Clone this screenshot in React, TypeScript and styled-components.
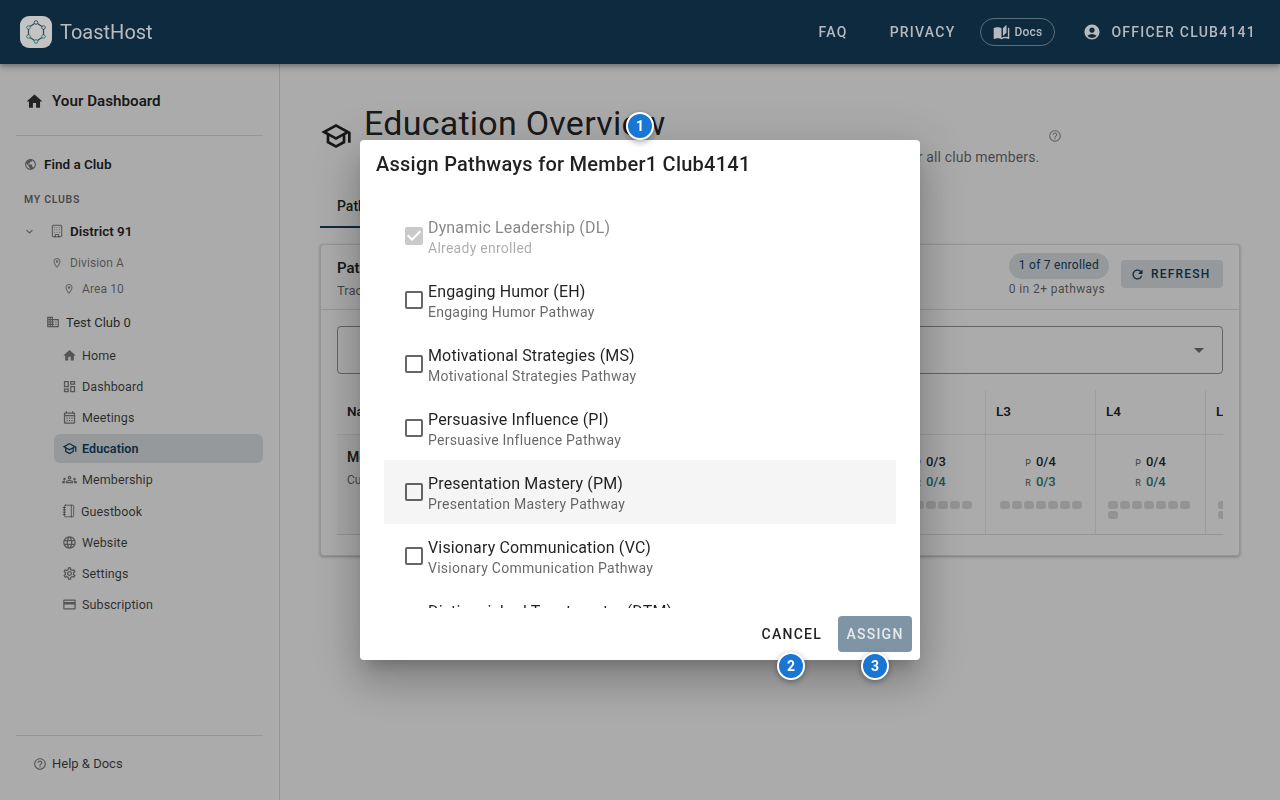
import * as React from 'react';
import styled, { createGlobalStyle } from 'styled-components';
import {
  MdAccountCircle,
  MdArrowDropDown,
  MdAutoStories,
  MdCheckBox,
  MdCheckBoxOutlineBlank,
  MdCreditCard,
  MdExpandMore,
  MdHelpOutline,
  MdHome,
  MdLanguage,
  MdOutlineBusiness,
  MdOutlineCalendarMonth,
  MdOutlineDashboard,
  MdOutlineGroups,
  MdOutlineLocationOn,
  MdOutlineSchool,
  MdOutlineSettings,
  MdPublic,
  MdRefresh,
} from 'react-icons/md';
import { Building, Notebook } from 'lucide-react';

const GlobalStyle = createGlobalStyle`
  html, body {
    margin: 0;
    height: 100%;
    overflow: hidden;
    background: #fff;
    font-family: Roboto, "Liberation Sans", sans-serif;
  }
`;

const Page = styled.div`
  height: 800px;
  display: flex;
  flex-direction: column;
`;

const Header = styled.header`
  position: relative;
  z-index: 10;
  height: 64px;
  flex: none;
  display: flex;
  align-items: center;
  padding: 0 24px 0 20px;
  background: #0e2a3e;
  color: #b4babe;
  box-shadow: 0 2px 4px -1px rgba(0, 0, 0, 0.2), 0 4px 5px rgba(0, 0, 0, 0.14),
    0 1px 10px rgba(0, 0, 0, 0.12);
`;

const LogoBox = styled.div`
  width: 32px;
  height: 32px;
  border-radius: 9px;
  background: #c4c4c4;
  display: flex;
  align-items: center;
  justify-content: center;
  margin-right: 8px;
`;

const Brand = styled.div`
  font-size: 20px;
  letter-spacing: 0;
  color: #b9bdc0;
`;

const HeaderNav = styled.nav`
  margin-left: auto;
  display: flex;
  align-items: center;
`;

const NavLink = styled.span<{ $gap: number }>`
  font-size: 14px;
  font-weight: 500;
  letter-spacing: 1.25px;
  margin-right: ${(p) => p.$gap}px;
`;

const DocsPill = styled.span`
  display: flex;
  align-items: center;
  gap: 5px;
  height: 28px;
  padding: 0 12px;
  box-sizing: border-box;
  border: 1px solid #5c6f7c;
  border-radius: 14px;
  font-size: 12px;
  font-weight: 500;
  letter-spacing: 0.2px;
  margin-right: 28px;
`;

const UserName = styled.span`
  display: flex;
  align-items: center;
  gap: 10px;
  font-size: 14px;
  font-weight: 500;
  letter-spacing: 1.25px;
`;

const Body = styled.div`
  flex: 1;
  min-height: 0;
  display: flex;
`;

const Sidebar = styled.aside`
  width: 280px;
  flex: none;
  box-sizing: border-box;
  border-right: 1px solid rgba(0, 0, 0, 0.12);
  padding: 24px 16px 0;
  display: flex;
  flex-direction: column;
`;

const DashboardLink = styled.div`
  display: flex;
  align-items: center;
  height: 26px;
  padding-left: 9px;
  gap: 8px;
  font-size: 15.2px;
  font-weight: 600;
  color: rgba(0, 0, 0, 0.87);
  svg {
    color: rgba(0, 0, 0, 0.8);
  }
`;

const Rule = styled.hr`
  border: 0;
  height: 1px;
  background: rgba(0, 0, 0, 0.12);
  margin: 21px 0 0;
`;

const FindClub = styled.div`
  display: flex;
  align-items: center;
  gap: 7px;
  margin-top: 18px;
  height: 20px;
  padding-left: 8px;
  font-size: 13.5px;
  font-weight: 600;
  color: rgba(0, 0, 0, 0.87);
  svg {
    color: rgba(0, 0, 0, 0.5);
  }
`;

const SectionLabel = styled.div`
  margin-top: 18px;
  padding-left: 8px;
  font-size: 10.5px;
  font-weight: 600;
  letter-spacing: 0.7px;
  line-height: 16px;
  color: rgba(0, 0, 0, 0.6);
`;

const DistrictRow = styled.div`
  display: flex;
  align-items: center;
  margin-top: 11px;
  margin-bottom: 7px;
  height: 24px;
  padding-left: 7px;
  font-size: 13.5px;
  font-weight: 600;
  color: rgba(0, 0, 0, 0.87);
  svg {
    color: rgba(0, 0, 0, 0.5);
    flex: none;
  }
`;

const RowIconGap = styled.span`
  display: inline-flex;
  margin: 0 6px 0 14px;
`;

const RegionRow = styled.div<{ $indent: number }>`
  display: flex;
  align-items: center;
  gap: 7px;
  height: 26px;
  padding-left: ${(p) => p.$indent}px;
  font-size: 12px;
  color: rgba(0, 0, 0, 0.55);
  letter-spacing: 0.1px;
  svg {
    color: rgba(0, 0, 0, 0.42);
  }
`;

const ClubRow = styled.div`
  display: flex;
  align-items: center;
  gap: 6px;
  height: 24px;
  margin-top: 8px;
  padding-left: 30px;
  font-size: 13px;
  color: rgba(0, 0, 0, 0.8);
  svg {
    color: rgba(0, 0, 0, 0.5);
  }
`;

const ClubNav = styled.div`
  display: flex;
  flex-direction: column;
  margin: 6.5px 0 0 38px;
`;

const ClubNavItem = styled.div<{ $active?: boolean }>`
  display: flex;
  align-items: center;
  gap: 5px;
  height: 29.2px;
  margin-bottom: 2px;
  padding-left: 8px;
  border-radius: 6px;
  font-size: 12.5px;
  letter-spacing: 0.1px;
  font-weight: ${(p) => (p.$active ? 600 : 400)};
  color: ${(p) => (p.$active ? '#15405d' : 'rgba(0, 0, 0, 0.75)')};
  background: ${(p) => (p.$active ? 'rgba(21, 63, 93, 0.14)' : 'transparent')};
  svg {
    color: ${(p) => (p.$active ? '#15405d' : 'rgba(0, 0, 0, 0.5)')};
  }
`;

const SidebarFooter = styled.div`
  margin-top: auto;
  border-top: 1px solid rgba(0, 0, 0, 0.12);
  height: 65px;
  box-sizing: border-box;
  padding: 18px 0 0 17px;
  display: flex;
  align-items: flex-start;
  gap: 5px;
  font-size: 13px;
  line-height: 20px;
  color: rgba(0, 0, 0, 0.75);
  svg {
    color: rgba(0, 0, 0, 0.5);
    margin-top: 3px;
  }
`;

const Main = styled.main`
  flex: 1;
  min-width: 0;
  padding: 39px 40px 0;
`;

const TitleRow = styled.div`
  display: flex;
  align-items: flex-start;
  height: 93px;
  svg {
    flex: none;
  }
`;

const TitleIcon = styled.div`
  margin: 17px 12px 0 0;
  display: flex;
  color: rgba(0, 0, 0, 0.87);
`;

const Title = styled.h1`
  margin: 0;
  font-size: 34px;
  font-weight: 400;
  line-height: 40px;
  letter-spacing: 0.25px;
  color: rgba(0, 0, 0, 0.87);
`;

const Subtitle = styled.p`
  margin: 4px 0 0;
  font-size: 14px;
  line-height: 20px;
  letter-spacing: 0.15px;
  color: rgba(0, 0, 0, 0.6);
`;

const HelpSpot = styled.div`
  margin: 26px 0 0 auto;
  padding-right: 178px;
  display: flex;
  color: rgba(0, 0, 0, 0.4);
`;

const Tabs = styled.div`
  height: 32px;
  display: flex;
`;

const Tab = styled.div`
  width: 150px;
  height: 30px;
  padding-left: 17px;
  font-size: 14px;
  font-weight: 500;
  line-height: 20px;
  color: rgba(0, 0, 0, 0.87);
  border-bottom: 2px solid #15405d;
`;

const Card = styled.section`
  margin-top: 16px;
  height: 312px;
  box-sizing: border-box;
  border: 1px solid rgba(0, 0, 0, 0.12);
  border-radius: 4px;
  box-shadow: 0 1px 3px rgba(0, 0, 0, 0.3);
  background: #fff;
`;

const CardHeader = styled.div`
  height: 65px;
  box-sizing: border-box;
  display: flex;
  justify-content: space-between;
  padding: 8px 16px 0;
  border-bottom: 1px solid rgba(0, 0, 0, 0.12);
`;

const CardIntro = styled.div`
  padding-top: 2px;
`;

const CardTitle = styled.div`
  font-size: 15px;
  font-weight: 600;
  line-height: 26px;
  color: rgba(0, 0, 0, 0.87);
`;

const CardSub = styled.div`
  font-size: 13px;
  line-height: 20px;
  color: rgba(0, 0, 0, 0.6);
`;

const CardActions = styled.div`
  display: flex;
  align-items: flex-start;
  gap: 12px;
`;

const EnrollStats = styled.div`
  display: flex;
  flex-direction: column;
  align-items: flex-start;
`;

const EnrollChip = styled.div`
  height: 26px;
  padding: 0 10px;
  border-radius: 13px;
  font-size: 12px;
  letter-spacing: 0.27px;
  line-height: 25px;
  color: #15405d;
  background: rgba(21, 63, 93, 0.14);
`;

const EnrollNote = styled.div`
  margin-top: 1px;
  font-size: 12px;
  letter-spacing: 0.4px;
  line-height: 18px;
  color: rgba(0, 0, 0, 0.6);
`;

const RefreshButton = styled.div`
  margin-top: 7px;
  height: 28px;
  width: 102px;
  box-sizing: border-box;
  padding-left: 9px;
  display: flex;
  align-items: center;
  gap: 6px;
  border-radius: 4px;
  font-size: 12px;
  font-weight: 500;
  letter-spacing: 1.2px;
  color: #15405d;
  background: rgba(21, 63, 93, 0.14);
`;

const CardBody = styled.div`
  padding: 16px;
`;

const SelectBox = styled.div`
  height: 48px;
  box-sizing: border-box;
  border: 1px solid rgba(0, 0, 0, 0.42);
  border-radius: 4px;
  display: flex;
  align-items: center;
  justify-content: flex-end;
  padding-right: 11px;
  color: rgba(0, 0, 0, 0.55);
`;

const TableClip = styled.div`
  margin-top: 16px;
  overflow: hidden;
`;

const TableGrid = styled.div`
  display: grid;
  grid-template-columns: 428px repeat(5, 110px);
  width: 978px;
`;

const HeadCell = styled.div<{ $first?: boolean }>`
  height: 45px;
  box-sizing: border-box;
  padding: 0 10px 2px;
  display: flex;
  align-items: center;
  font-size: 13.5px;
  font-weight: 600;
  color: rgba(0, 0, 0, 0.87);
  border-bottom: 1px solid rgba(0, 0, 0, 0.08);
  border-left: ${(p) => (p.$first ? '0' : '1px solid rgba(0, 0, 0, 0.08)')};
`;

const NameCell = styled.div`
  height: 100px;
  box-sizing: border-box;
  padding: 12px 10px 0;
  border-bottom: 1px solid rgba(0, 0, 0, 0.12);
  background: rgba(0, 0, 0, 0.02);
`;

const MemberName = styled.div`
  font-size: 14px;
  font-weight: 600;
  line-height: 20px;
  color: rgba(0, 0, 0, 0.87);
`;

const MemberNote = styled.div`
  margin-top: 4px;
  font-size: 12px;
  line-height: 18px;
  color: rgba(0, 0, 0, 0.6);
`;

const LevelCell = styled.div`
  height: 100px;
  box-sizing: border-box;
  padding-top: 19px;
  display: flex;
  flex-direction: column;
  border-left: 1px solid rgba(0, 0, 0, 0.08);
  border-bottom: 1px solid rgba(0, 0, 0, 0.12);
`;

const ScoreLine = styled.div`
  height: 20px;
  display: flex;
  justify-content: center;
  align-items: baseline;
  gap: 5px;
`;

const ScoreKey = styled.span`
  font-size: 9px;
  font-weight: 500;
  color: rgba(0, 0, 0, 0.55);
`;

const ScoreValue = styled.span<{ $review?: boolean }>`
  font-size: 13px;
  font-weight: 500;
  color: ${(p) => (p.$review ? '#2e7d7a' : 'rgba(0, 0, 0, 0.87)')};
`;

const Dots = styled.div`
  margin: 7px auto 0;
  width: fit-content;
  max-width: 86px;
  display: flex;
  flex-wrap: wrap;
  gap: 2px;
`;

const Dot = styled.span`
  width: 10px;
  height: 8px;
  border-radius: 3px;
  background: rgba(0, 0, 0, 0.14);
`;

const Backdrop = styled.div`
  position: fixed;
  inset: 0;
  z-index: 5;
  background: rgba(0, 0, 0, 0.33);
`;

const Dialog = styled.div`
  position: fixed;
  z-index: 20;
  left: 360px;
  top: 140px;
  width: 560px;
  height: 520px;
  display: flex;
  flex-direction: column;
  background: #fff;
  border-radius: 4px;
  box-shadow: 0 11px 15px -7px rgba(0, 0, 0, 0.2), 0 24px 38px 3px rgba(0, 0, 0, 0.14),
    0 9px 46px 8px rgba(0, 0, 0, 0.12);
`;

const DialogTitle = styled.h2`
  margin: 0;
  flex: none;
  height: 64px;
  box-sizing: border-box;
  padding: 12px 16px 0;
  font-size: 20px;
  font-weight: 500;
  line-height: 24px;
  letter-spacing: 0.25px;
  color: rgba(0, 0, 0, 0.87);
`;

const PathwayList = styled.div`
  flex: 1;
  min-height: 0;
  overflow: hidden;
  padding: 0 24px;
`;

const PathwayRow = styled.div<{ $hover?: boolean; $disabled?: boolean }>`
  height: 64px;
  box-sizing: border-box;
  padding: 13px 0 0 21px;
  display: flex;
  gap: 2px;
  background: ${(p) => (p.$hover ? '#f5f5f5' : 'transparent')};
  opacity: ${(p) => (p.$disabled ? 0.55 : 1)};
`;

const CheckSlot = styled.div<{ $disabled?: boolean }>`
  flex: none;
  margin: 7px 0 0 -3px;
  display: flex;
  color: ${(p) => (p.$disabled ? 'rgba(0, 0, 0, 0.38)' : 'rgba(0, 0, 0, 0.6)')};
`;

const PathwayName = styled.div`
  font-size: 16px;
  line-height: 21px;
  letter-spacing: 0.15px;
  color: rgba(0, 0, 0, 0.87);
`;

const PathwayNote = styled.div`
  font-size: 14px;
  line-height: 20px;
  letter-spacing: 0.26px;
  color: rgba(0, 0, 0, 0.6);
`;

const DialogActions = styled.div`
  flex: none;
  height: 52px;
  box-sizing: border-box;
  padding: 8px 8px 0;
  display: flex;
  justify-content: flex-end;
  align-items: flex-start;
  gap: 8px;
`;

const TextButton = styled.button`
  height: 36px;
  padding: 0 8px 0 10px;
  border: 0;
  background: transparent;
  font-family: inherit;
  font-size: 14px;
  font-weight: 500;
  letter-spacing: 1.25px;
  color: rgba(0, 0, 0, 0.87);
`;

const AssignButton = styled(TextButton)`
  width: 74px;
  padding: 0;
  border-radius: 4px;
  background: #7f95a5;
  color: #e6eaed;
`;

const Marker = styled.div<{ $x: number; $y: number }>`
  position: fixed;
  z-index: 30;
  left: ${(p) => p.$x - 14}px;
  top: ${(p) => p.$y - 14}px;
  width: 28px;
  height: 28px;
  box-sizing: border-box;
  border: 2px solid #fff;
  border-radius: 50%;
  background: #1976d2;
  color: #fff;
  font-size: 14px;
  font-weight: 700;
  display: flex;
  align-items: center;
  justify-content: center;
  box-shadow: 0 2px 6px rgba(0, 0, 0, 0.35);
`;

const hexNodes: [number, number, string][] = [
  [13, 3.5, '#3c5660'],
  [20.5, 8.5, '#3c5660'],
  [20.5, 17.5, '#2e7d7a'],
  [13, 22.5, '#2e7d7a'],
  [5.5, 17.5, '#2e7d7a'],
  [5.5, 8.5, '#2e7d7a'],
];

const ToastLogo = () => (
  <svg width="26" height="26" viewBox="0 0 26 26" fill="none">
    <path d="M13 3.5 L20.5 8.5 L20.5 17.5 L13 22.5 L5.5 17.5 L5.5 8.5 Z" stroke="#2f4650" strokeWidth="1.2" />
    {hexNodes.map(([cx, cy, stroke]) => (
      <circle key={`${cx}-${cy}`} cx={cx} cy={cy} r="1.8" fill="#c4c4c4" stroke={stroke} strokeWidth="1" />
    ))}
  </svg>
);

const clubLinks = [
  { label: 'Home', icon: <MdHome size={15} /> },
  { label: 'Dashboard', icon: <MdOutlineDashboard size={15} /> },
  { label: 'Meetings', icon: <MdOutlineCalendarMonth size={15} /> },
  { label: 'Education', icon: <MdOutlineSchool size={15} />, active: true },
  { label: 'Membership', icon: <MdOutlineGroups size={15} /> },
  { label: 'Guestbook', icon: <Notebook size={14} strokeWidth={1.6} /> },
  { label: 'Website', icon: <MdLanguage size={15} /> },
  { label: 'Settings', icon: <MdOutlineSettings size={15} /> },
  { label: 'Subscription', icon: <MdCreditCard size={15} /> },
];

const pathways = [
  { name: 'Dynamic Leadership (DL)', note: 'Already enrolled', enrolled: true },
  { name: 'Engaging Humor (EH)', note: 'Engaging Humor Pathway' },
  { name: 'Motivational Strategies (MS)', note: 'Motivational Strategies Pathway' },
  { name: 'Persuasive Influence (PI)', note: 'Persuasive Influence Pathway' },
  { name: 'Presentation Mastery (PM)', note: 'Presentation Mastery Pathway', hover: true },
  { name: 'Visionary Communication (VC)', note: 'Visionary Communication Pathway' },
  { name: 'Distinguished Toastmaster (DTM)', note: 'Distinguished Toastmaster Pathway' },
];

const levels = [
  { label: 'L1', p: '0/3', r: '0/3', dots: 6 },
  { label: 'L2', p: '0/3', r: '0/4', dots: 7 },
  { label: 'L3', p: '0/4', r: '0/3', dots: 7 },
  { label: 'L4', p: '0/4', r: '0/4', dots: 8 },
  { label: 'L5', p: '0/4', r: '0/4', dots: 8 },
];

export default function App() {
  return (
    <Page>
      <GlobalStyle />
      <Header>
        <LogoBox>
          <ToastLogo />
        </LogoBox>
        <Brand>ToastHost</Brand>
        <HeaderNav>
          <NavLink $gap={42}>FAQ</NavLink>
          <NavLink $gap={24}>PRIVACY</NavLink>
          <DocsPill>
            <MdAutoStories size={17} />
            Docs
          </DocsPill>
          <UserName>
            <MdAccountCircle size={18} />
            OFFICER CLUB4141
          </UserName>
        </HeaderNav>
      </Header>

      <Body>
        <Sidebar>
          <DashboardLink>
            <MdHome size={19} />
            Your Dashboard
          </DashboardLink>
          <Rule />
          <FindClub>
            <MdPublic size={13} />
            Find a Club
          </FindClub>
          <SectionLabel>MY CLUBS</SectionLabel>
          <DistrictRow>
            <MdExpandMore size={13} />
            <RowIconGap>
              <Building size={14} strokeWidth={1.8} />
            </RowIconGap>
            District 91
          </DistrictRow>
          <RegionRow $indent={35}>
            <MdOutlineLocationOn size={12} />
            Division A
          </RegionRow>
          <RegionRow $indent={47}>
            <MdOutlineLocationOn size={12} />
            Area 10
          </RegionRow>
          <ClubRow>
            <MdOutlineBusiness size={14} />
            Test Club 0
          </ClubRow>
          <ClubNav>
            {clubLinks.map((link) => (
              <ClubNavItem key={link.label} $active={link.active}>
                {link.icon}
                {link.label}
              </ClubNavItem>
            ))}
          </ClubNav>
          <SidebarFooter>
            <MdHelpOutline size={14} />
            Help &amp; Docs
          </SidebarFooter>
        </Sidebar>

        <Main>
          <TitleRow>
            <TitleIcon>
              <MdOutlineSchool size={32} />
            </TitleIcon>
            <div>
              <Title>Education Overview</Title>
              <Subtitle>Track pathway enrollment and level progress across all of the assigned learning path for all club members.</Subtitle>
            </div>
            <HelpSpot>
              <MdHelpOutline size={14} />
            </HelpSpot>
          </TitleRow>
          <Tabs>
            <Tab>Pathways</Tab>
          </Tabs>
          <Card>
            <CardHeader>
              <CardIntro>
                <CardTitle>Pathway Progress</CardTitle>
                <CardSub>Track each member's progress</CardSub>
              </CardIntro>
              <CardActions>
                <EnrollStats>
                  <EnrollChip>1 of 7 enrolled</EnrollChip>
                  <EnrollNote>0 in 2+ pathways</EnrollNote>
                </EnrollStats>
                <RefreshButton>
                  <MdRefresh size={15} />
                  REFRESH
                </RefreshButton>
              </CardActions>
            </CardHeader>
            <CardBody>
              <SelectBox>
                <MdArrowDropDown size={24} />
              </SelectBox>
              <TableClip>
                <TableGrid>
                  <HeadCell $first>Name</HeadCell>
                  {levels.map((level) => (
                    <HeadCell key={level.label}>{level.label}</HeadCell>
                  ))}
                  <NameCell>
                    <MemberName>Member1 Club4141</MemberName>
                    <MemberNote>Current pathway</MemberNote>
                  </NameCell>
                  {levels.map((level) => (
                    <LevelCell key={level.label}>
                      <ScoreLine>
                        <ScoreKey>P</ScoreKey>
                        <ScoreValue>{level.p}</ScoreValue>
                      </ScoreLine>
                      <ScoreLine>
                        <ScoreKey>R</ScoreKey>
                        <ScoreValue $review>{level.r}</ScoreValue>
                      </ScoreLine>
                      <Dots>
                        {Array.from({ length: level.dots }, (_, i) => (
                          <Dot key={i} />
                        ))}
                      </Dots>
                    </LevelCell>
                  ))}
                </TableGrid>
              </TableClip>
            </CardBody>
          </Card>
        </Main>
      </Body>

      <Backdrop />

      <Dialog>
        <DialogTitle>Assign Pathways for Member1 Club4141</DialogTitle>
        <PathwayList>
          {pathways.map((pathway) => (
            <PathwayRow key={pathway.name} $hover={pathway.hover} $disabled={pathway.enrolled}>
              <CheckSlot $disabled={pathway.enrolled}>
                {pathway.enrolled ? <MdCheckBox size={24} /> : <MdCheckBoxOutlineBlank size={24} />}
              </CheckSlot>
              <div>
                <PathwayName>{pathway.name}</PathwayName>
                <PathwayNote>{pathway.note}</PathwayNote>
              </div>
            </PathwayRow>
          ))}
        </PathwayList>
        <DialogActions>
          <TextButton>CANCEL</TextButton>
          <AssignButton>ASSIGN</AssignButton>
        </DialogActions>
      </Dialog>

      <Marker $x={640} $y={126}>1</Marker>
      <Marker $x={791} $y={666}>2</Marker>
      <Marker $x={875} $y={666}>3</Marker>
    </Page>
  );
}
